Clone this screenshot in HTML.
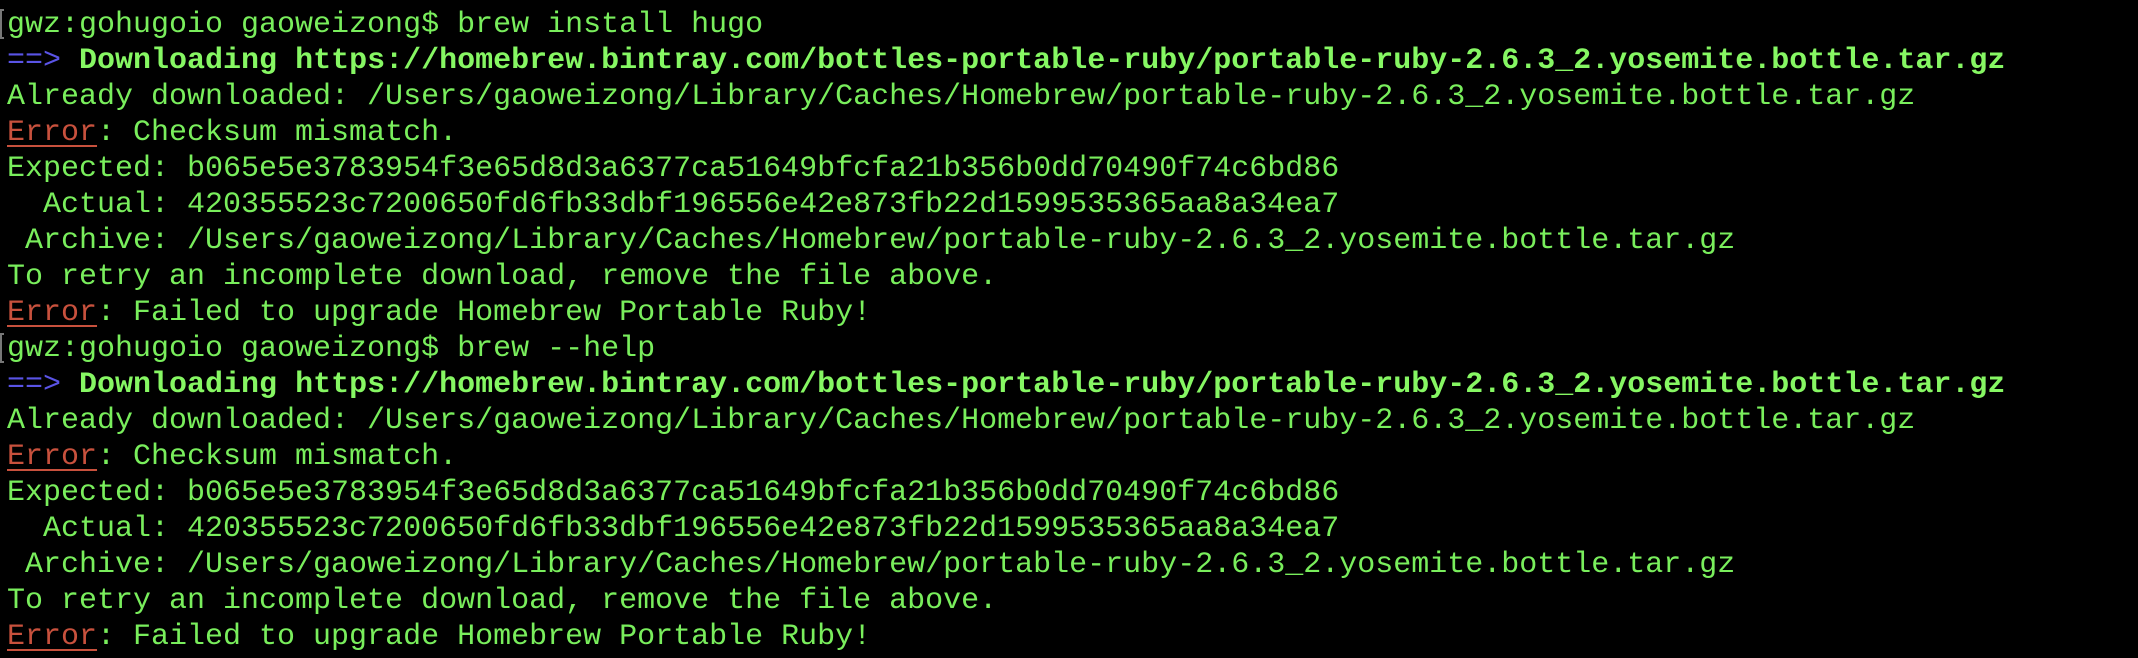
<!DOCTYPE html>
<html><head><meta charset="utf-8"><style>
html,body{margin:0;padding:0;background:#000;width:2138px;height:658px;overflow:hidden;}
body{position:relative;}
pre{margin:0;position:absolute;left:7px;top:7px;font-family:"Liberation Mono","DejaVu Sans Mono",monospace;font-size:30px;line-height:36px;color:#79ee5c;white-space:pre;}
b{color:#86f763;font-weight:bold;}
.a{color:#5a54e6;}
.e{color:#c8513d;text-decoration:underline;text-decoration-thickness:2px;text-underline-offset:5px;}
.br{position:absolute;left:0;top:9px;width:4px;height:30px;border:2px solid #777;border-right:none;box-sizing:border-box;}
.br2{top:333px;}
</style></head><body>
<div class="br"></div><div class="br br2"></div>
<pre>gwz:gohugoio gaoweizong$ brew install hugo
<span class="a">==&gt;</span> <b>Downloading https://homebrew.bintray.com/bottles-portable-ruby/portable-ruby-2.6.3_2.yosemite.bottle.tar.gz</b>
Already downloaded: /Users/gaoweizong/Library/Caches/Homebrew/portable-ruby-2.6.3_2.yosemite.bottle.tar.gz
<span class="e">Error</span>: Checksum mismatch.
Expected: b065e5e3783954f3e65d8d3a6377ca51649bfcfa21b356b0dd70490f74c6bd86
  Actual: 420355523c7200650fd6fb33dbf196556e42e873fb22d1599535365aa8a34ea7
 Archive: /Users/gaoweizong/Library/Caches/Homebrew/portable-ruby-2.6.3_2.yosemite.bottle.tar.gz
To retry an incomplete download, remove the file above.
<span class="e">Error</span>: Failed to upgrade Homebrew Portable Ruby!
gwz:gohugoio gaoweizong$ brew --help
<span class="a">==&gt;</span> <b>Downloading https://homebrew.bintray.com/bottles-portable-ruby/portable-ruby-2.6.3_2.yosemite.bottle.tar.gz</b>
Already downloaded: /Users/gaoweizong/Library/Caches/Homebrew/portable-ruby-2.6.3_2.yosemite.bottle.tar.gz
<span class="e">Error</span>: Checksum mismatch.
Expected: b065e5e3783954f3e65d8d3a6377ca51649bfcfa21b356b0dd70490f74c6bd86
  Actual: 420355523c7200650fd6fb33dbf196556e42e873fb22d1599535365aa8a34ea7
 Archive: /Users/gaoweizong/Library/Caches/Homebrew/portable-ruby-2.6.3_2.yosemite.bottle.tar.gz
To retry an incomplete download, remove the file above.
<span class="e">Error</span>: Failed to upgrade Homebrew Portable Ruby!</pre>
</body></html>
